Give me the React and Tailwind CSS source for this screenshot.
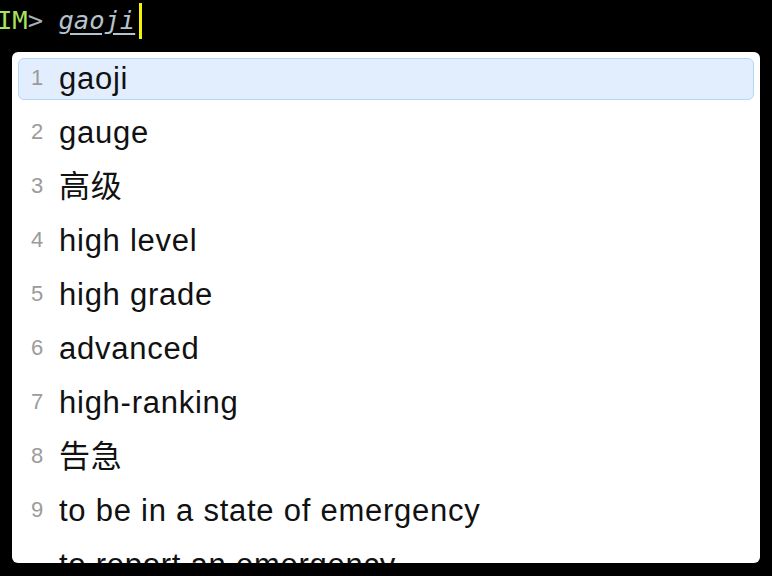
const candidates = [
  'gaoji',
  'gauge',
  '高级',
  'high level',
  'high grade',
  'advanced',
  'high-ranking',
  '告急',
  'to be in a state of emergency',
  'to report an emergency',
];

function Row({ index, text, selected }) {
  return (
    <div className="h-[54px] py-[6px]">
      <div
        className={
          'h-[42px] flex items-center rounded-[6px] border pl-[12px] ' +
          (selected ? 'bg-[#e2eefd] border-[#b3d6fb]' : 'border-transparent')
        }
      >
        <span className="w-[28px] shrink-0 mb-[4px] text-[22px] text-[#9b9b9b]">{index}</span>
        <span className="text-[31px] tracking-[0.75px] text-[#111] whitespace-nowrap">{text}</span>
      </div>
    </div>
  );
}

export default function App() {
  return (
    <div className="w-[772px] h-[576px] bg-black overflow-hidden" style={{ fontFamily: '"Liberation Sans", "Noto Sans CJK SC", sans-serif' }}>
      {/* command line */}
      <div
        className="h-[51px] flex items-start pt-[3px] ml-[-3px] text-[25.5px] leading-[34px] whitespace-pre"
        style={{ fontFamily: '"DejaVu Sans Mono", monospace' }}
      >
        <span className="text-[#a9e35f]">IM</span>
        <span className="text-[#a8b0b8]">&gt; </span>
        <span className="italic text-[#b7c3cc] underline decoration-[#b7c3cc] underline-offset-[4px]">gaoji</span>
        <span className="ml-[4px] w-[3px] h-[36px] bg-[#f4f20c]" />
      </div>

      {/* candidate popup */}
      <div className="mx-[12px] mt-[1px] h-[511px] bg-white rounded-[6px] overflow-hidden px-[6px]">
        {candidates.map((c, i) => (
          <Row key={i} index={i < 9 ? i + 1 : ''} text={c} selected={i === 0} />
        ))}
      </div>
    </div>
  );
}
